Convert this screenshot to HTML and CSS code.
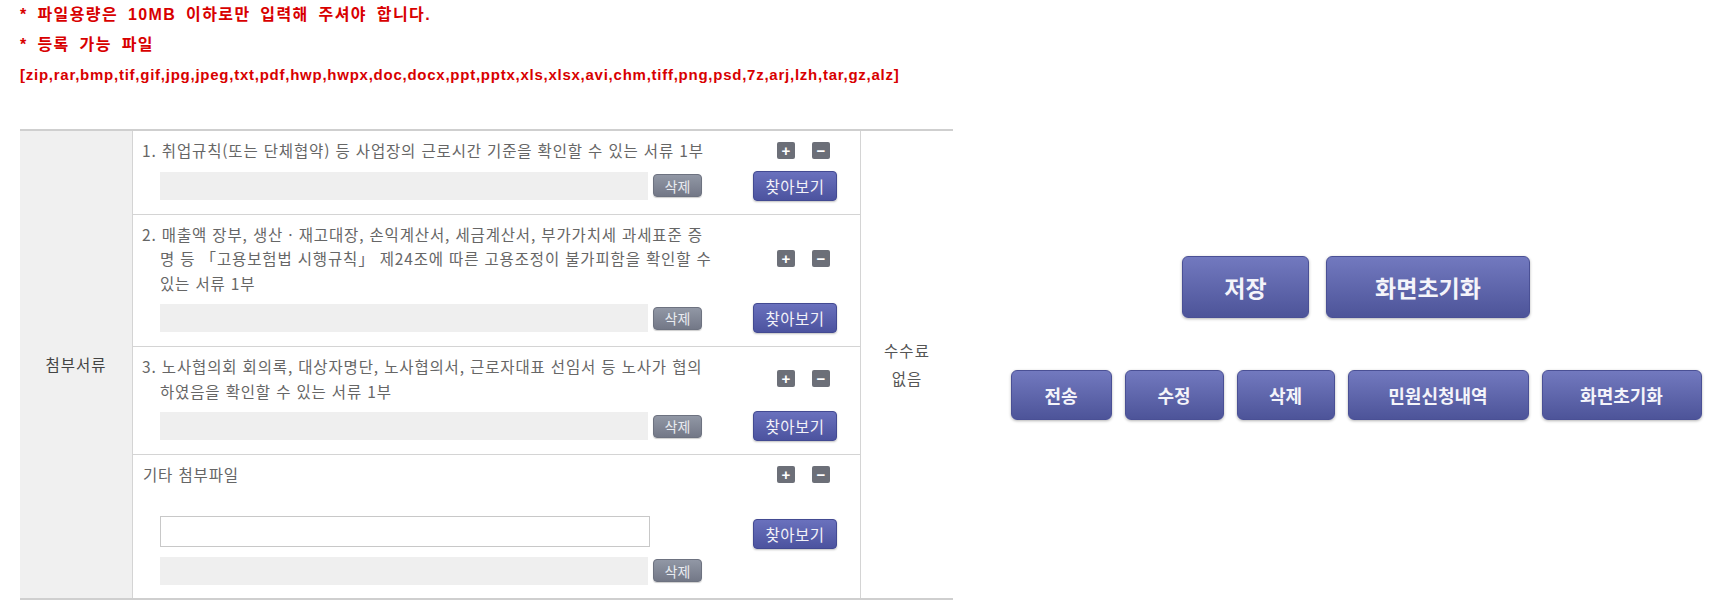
FILE: index.html
```html
<!DOCTYPE html>
<html lang="ko">
<head>
    <meta charset="UTF-8">
    <title>첨부서류 등록</title>
    <link rel="stylesheet" href="styles.css">
</head>
<body>
    <div class="page">
        <div class="left">
            <!-- 안내 문구 -->
            <p class="notice">* 파일용량은 10MB 이하로만 입력해 주셔야 합니다.</p>
            <p class="notice">* 등록 가능 파일</p>
            <p class="notice ext">[zip,rar,bmp,tif,gif,jpg,jpeg,txt,pdf,hwp,hwpx,doc,docx,ppt,pptx,xls,xlsx,avi,chm,tiff,png,psd,7z,arj,lzh,tar,gz,alz]</p>

            <!-- 첨부서류 표 -->
            <table class="attach">
                <tr>
                    <th rowspan="4">첨부서류</th>
                    <td class="doc-cell">
                        <div class="doc">
                            <div class="doc-head">
                                <p class="doc-desc">1. 취업규칙(또는 단체협약) 등 사업장의 근로시간 기준을 확인할 수 있는 서류 1부</p>
                                <div class="tools"><span class="sq">+</span><span class="sq">−</span></div>
                            </div>
                            <div class="doc-file">
                                <div class="file-bar"></div>
                                <button type="button" class="btn-del">삭제</button>
                                <button type="button" class="btn-find">찾아보기</button>
                            </div>
                        </div>
                    </td>
                    <td rowspan="4" class="fee">수수료<br>없음</td>
                </tr>
                <tr>
                    <td class="doc-cell">
                        <div class="doc">
                            <div class="doc-head">
                                <p class="doc-desc">2. 매출액 장부, 생산 · 재고대장, 손익계산서, 세금계산서, 부가가치세 과세표준 증<br>명 등 「고용보험법 시행규칙」 제24조에 따른 고용조정이 불가피함을 확인할 수<br>있는 서류 1부</p>
                                <div class="tools"><span class="sq">+</span><span class="sq">−</span></div>
                            </div>
                            <div class="doc-file">
                                <div class="file-bar"></div>
                                <button type="button" class="btn-del">삭제</button>
                                <button type="button" class="btn-find">찾아보기</button>
                            </div>
                        </div>
                    </td>
                </tr>
                <tr>
                    <td class="doc-cell">
                        <div class="doc">
                            <div class="doc-head">
                                <p class="doc-desc">3. 노사협의회 회의록, 대상자명단, 노사협의서, 근로자대표 선임서 등 노사가 협의<br>하였음을 확인할 수 있는 서류 1부</p>
                                <div class="tools"><span class="sq">+</span><span class="sq">−</span></div>
                            </div>
                            <div class="doc-file">
                                <div class="file-bar"></div>
                                <button type="button" class="btn-del">삭제</button>
                                <button type="button" class="btn-find">찾아보기</button>
                            </div>
                        </div>
                    </td>
                </tr>
                <tr>
                    <td class="doc-cell">
                        <div class="doc doc-etc">
                            <div class="doc-head">
                                <p class="doc-desc etc">기타 첨부파일</p>
                                <div class="tools"><span class="sq">+</span><span class="sq">−</span></div>
                            </div>
                            <div class="doc-input">
                                <input type="text" class="file-input">
                                <button type="button" class="btn-find">찾아보기</button>
                            </div>
                            <div class="doc-file">
                                <div class="file-bar"></div>
                                <button type="button" class="btn-del">삭제</button>
                            </div>
                        </div>
                    </td>
                </tr>
            </table>
        </div>

        <!-- 버튼 영역 -->
        <div class="right">
            <div class="btn-row">
                <button type="button" class="btn-big w-save">저장</button>
                <button type="button" class="btn-big w-reset">화면초기화</button>
            </div>
            <div class="btn-row small">
                <button type="button" class="btn-mid w-send">전송</button>
                <button type="button" class="btn-mid w-edit">수정</button>
                <button type="button" class="btn-mid w-del">삭제</button>
                <button type="button" class="btn-mid w-list">민원신청내역</button>
                <button type="button" class="btn-mid w-reset2">화면초기화</button>
            </div>
        </div>
    </div>
</body>
</html>
```

FILE: styles.css
```css
body {
    margin: 0;
    background-color: #fff;
    font-family: "Noto Sans CJK KR", "Noto Sans", sans-serif;
    color: #666;
}

.page {
    display: flex;
    padding-left: 20px;
}

.left {
    width: 933px;
}

.right {
    flex: 1;
    margin-left: 50px;
    padding-top: 256px;
    display: flex;
    flex-direction: column;
    align-items: center;
    gap: 52px;
}

/* 안내 문구 */
.notice {
    margin: 0;
    height: 30px;
    line-height: 30px;
    color: #d80000;
    font-family: "Liberation Sans", "Noto Sans CJK KR", sans-serif;
    font-weight: bold;
    font-size: 16px;
    letter-spacing: 1.4px;
    word-spacing: 4px;
    white-space: nowrap;
}

.notice.ext {
    font-size: 15px;
    letter-spacing: 0.75px;
    word-spacing: 0;
}

/* 첨부서류 표 */
.attach {
    width: 933px;
    margin-top: 39px;
    border-collapse: collapse;
    border-top: 2px solid #cfcfcf;
    border-bottom: 2px solid #cfcfcf;
}

.attach th {
    width: 112px;
    padding: 0;
    background-color: #f0f0f0;
    border-right: 1px solid #d4d4d4;
    font-weight: normal;
    font-size: 15.5px;
    letter-spacing: 1px;
    color: #444;
}

.attach td {
    padding: 0;
}

.doc-cell {
    border-bottom: 1px solid #d4d4d4;
    border-right: 1px solid #d4d4d4;
}

.fee {
    width: 92px;
    text-align: center;
    font-size: 15.5px;
    letter-spacing: 1px;
    line-height: 28px;
    color: #555;
}

.doc {
    padding: 7px 0 13px 9px;
}

.doc-head {
    display: flex;
    align-items: center;
}

.doc-desc {
    margin: 0;
    width: 594px;
    font-size: 15.5px;
    letter-spacing: 0.85px;
    line-height: 24.5px;
    padding-left: 18px;
    text-indent: -18px;
    box-sizing: border-box;
    white-space: nowrap;
}

.doc-desc.etc {
    padding-left: 1px;
    text-indent: 0;
}

.tools {
    display: flex;
    gap: 17px;
    margin-left: 41px;
}

.sq {
    display: block;
    width: 18px;
    height: 17px;
    background-color: #6c6f78;
    border-radius: 2px;
    color: #fff;
    font-family: "Liberation Sans", sans-serif;
    font-weight: bold;
    font-size: 15px;
    line-height: 17px;
    text-align: center;
}

.doc-file {
    display: flex;
    align-items: center;
    margin-top: 8px;
    padding-left: 18px;
}

.file-bar {
    width: 488px;
    height: 28px;
    background-color: #efefef;
}

.btn-del {
    margin-left: 5px;
    width: 49px;
    height: 23px;
    padding: 0;
    border: 1px solid #6d7280;
    border-radius: 4px;
    background: linear-gradient(#9197a5, #737887);
    color: #e9ebf0;
    font-family: inherit;
    font-size: 14px;
    line-height: 20px;
    box-shadow: 0 1px 1px rgba(0, 0, 0, 0.2);
}

.btn-find {
    margin-left: 51px;
    width: 84px;
    height: 30px;
    padding: 0;
    border: 1px solid #434a92;
    border-radius: 4px;
    background: linear-gradient(#6a71bd, #4c539f);
    color: #f2f2f8;
    font-family: inherit;
    font-size: 15.5px;
    letter-spacing: 0.5px;
    box-shadow: 0 1px 2px rgba(0, 0, 0, 0.25);
}

.doc-input {
    display: flex;
    align-items: center;
    margin-top: 28px;
    padding-left: 18px;
}

.file-input {
    width: 490px;
    height: 31px;
    box-sizing: border-box;
    margin: 0;
    border: 1px solid #c8c8c8;
    background-color: #fff;
}

.doc-input .btn-find {
    margin-left: 103px;
    margin-top: 4px;
}

/* 하단 버튼 */
.btn-row {
    display: flex;
    gap: 17px;
}

.btn-row.small {
    gap: 13px;
}

.btn-big,
.btn-mid {
    padding: 0;
    border: 1px solid #4a5095;
    border-radius: 6px;
    background: linear-gradient(#7279bf, #4d5499);
    color: #f4f4fa;
    font-family: inherit;
    font-weight: bold;
    box-shadow: 0 1px 3px rgba(0, 0, 0, 0.3);
}

.btn-big {
    height: 62px;
    font-size: 23px;
}

.btn-mid {
    height: 50px;
    font-size: 18px;
}

.w-save { width: 127px; }
.w-reset { width: 204px; }
.w-send { width: 101px; }
.w-edit { width: 99px; }
.w-del { width: 98px; }
.w-list { width: 181px; }
.w-reset2 { width: 160px; }
```
